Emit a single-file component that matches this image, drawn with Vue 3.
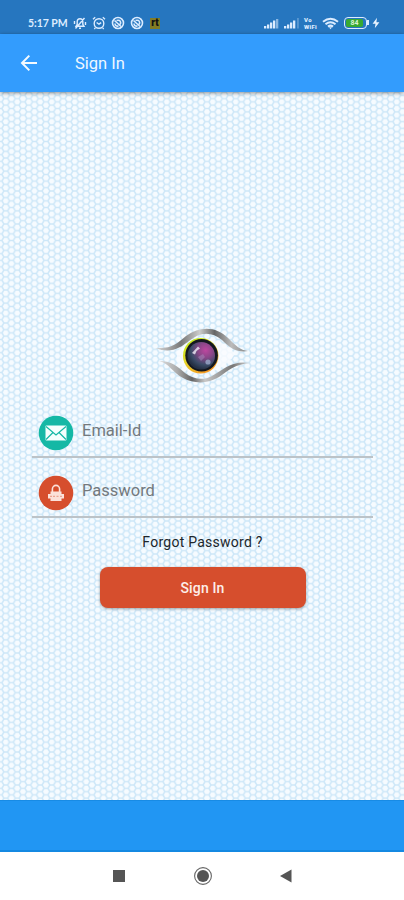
<template>
  <div class="screen">
    <div class="status-bar">
      <div class="status-left">
        <span class="clock">5:17 PM</span>
        <!-- muted bell -->
        <svg class="icon" width="14" height="14" viewBox="0 0 14 14">
          <path d="M3 10.300h8l-1.200-2V5.500a2.800 2.800 0 0 0-5.600 0v2.800zM6 12.300h2M2.500 12.500 11.500 2M1.500 5v3M12.500 6v3" />
        </svg>
        <!-- alarm -->
        <svg class="icon" width="14" height="14" viewBox="0 0 14 14">
          <circle cx="7" cy="7.500" r="4.800" />
          <path d="M4.600 6.500 7 8.200l2.200-1.500M1 3.200 3.200 1.300M13 3.200 10.800 1.300M3.300 12l-1 1M10.700 12l1 1" />
        </svg>
        <svg v-for="n in 2" :key="n" class="icon swirl" width="14" height="14" viewBox="0 0 14 14">
          <circle cx="7" cy="7" r="5.500" />
          <path d="M3.500 4.500 10 10.500M5.500 4.500c4-1 5 2 3.500 4M4 7.500c0 2 1.500 3 3.500 2.500" />
        </svg>
        <span class="app-badge">rt</span>
      </div>
      <div class="status-right">
        <svg width="15" height="11" viewBox="0 0 15 11" fill="#dcecff">
          <path d="M0 8h2.300v2.500H0zM3 6.500h2.300v4H3zM6 4.500h2.300v6H6zM9 2.500h2.300v8H9z" />
          <path d="M12 1h2.300v9.500H12z" opacity=".55" />
        </svg>
        <svg class="second" width="15" height="11" viewBox="0 0 15 11" fill="#dcecff">
          <path d="M0 8h2.300v2.500H0zM3 6.500h2.300v4H3zM6 4.500h2.300v6H6zM9 2.500h2.300v8H9z" />
          <path d="M13.300 0h1.300v10.500h-1.300z" opacity=".4" />
        </svg>
        <span class="vowifi"><span>Vo</span><span>WiFi</span></span>
        <svg class="wifi" width="17" height="13" viewBox="0 0 17 13" fill="none" stroke="#dcecff" stroke-width="2">
          <path d="M1 4.800Q8.500-1.200 16 4.800M3.500 7.200Q8.500 3.200 13.500 7.200M6 9.600Q8.500 7.600 11 9.600" />
          <path d="M7 10.200h3l-1.500 2z" fill="#dcecff" stroke="none" />
        </svg>
        <span class="battery"><span class="level">84</span></span>
        <svg class="bolt" width="8" height="12" viewBox="0 0 8 12" fill="#e8f3ff">
          <path d="M5 .8.600 6.800h2.900L2.800 11.200 7.400 5.200H4.400z" />
        </svg>
      </div>
    </div>

    <header class="app-bar">
      <svg width="18" height="18" viewBox="0 0 18 18" fill="none" stroke="#f4faff" stroke-width="2">
        <path d="M17 9H2.500M9.300 1.600 2 9l7.300 7.400" />
      </svg>
      <h1>Sign In</h1>
    </header>

    <main class="content">
      <svg class="pattern" width="100%" height="100%">
        <defs>
          <pattern id="hex" width="11.500" height="6.600" patternUnits="userSpaceOnUse">
            <path
              d="M0 3.300H1.900L3.800 0H7.650L9.550 3.300H11.500M1.900 3.300 3.800 6.600H7.650L9.550 3.300"
              fill="none"
              stroke="#cde7f8"
              stroke-width="1.500"
            />
          </pattern>
        </defs>
        <rect width="100%" height="100%" fill="url(#hex)" />
      </svg>

      <svg class="logo" width="96" height="56" viewBox="0 0 96 56">
        <defs>
          <linearGradient id="lidTop">
            <stop offset="0" stop-color="#ddd" />
            <stop offset=".28" stop-color="#777" />
            <stop offset=".48" stop-color="#ccc" />
            <stop offset=".64" stop-color="#666" />
            <stop offset=".82" stop-color="#bbb" />
            <stop offset="1" stop-color="#888" />
          </linearGradient>
          <linearGradient id="lidBottom">
            <stop offset="0" stop-color="#ddd" />
            <stop offset=".2" stop-color="#aaa" />
            <stop offset=".36" stop-color="#666" />
            <stop offset=".5" stop-color="#c8c8c8" />
            <stop offset=".8" stop-color="#777" />
            <stop offset="1" stop-color="#ddd" />
          </linearGradient>
          <linearGradient id="ring" x1="0" y1="0" x2=".6" y2="1">
            <stop offset="0" stop-color="#b9ef18" />
            <stop offset=".5" stop-color="#e4d82a" />
            <stop offset="1" stop-color="#f59a23" />
          </linearGradient>
          <radialGradient id="lens" cx=".66" cy=".3" r=".7">
            <stop offset="0" stop-color="#bd479f" />
            <stop offset=".4" stop-color="#874787" />
            <stop offset=".75" stop-color="#3b4c68" />
            <stop offset="1" stop-color="#253044" />
          </radialGradient>
        </defs>
        <!-- white of the eye -->
        <path d="M22 24C34 8 62 4 80 26 66 48 34 52 22 34z" fill="#fbfdff" opacity=".8" />
        <path
          d="M0 20C18 21 22 15 31 8 46-3 62-1 73 10c8 8 12 12 20 13-12 2-19-4-26-11C56 3 45 4 34 13 25 20 16 26 0 20z"
          fill="url(#lidTop)"
        />
        <path
          d="M4 33c13 0 18 5 26 12 8 6 18 8 27 3 12-7 20-16 39-13-16 1-22 7-32 14-11 7-25 7-36 1C17 44 15 36 4 33z"
          fill="url(#lidBottom)"
        />
        <circle cx="45.700" cy="27.800" r="17.800" fill="url(#ring)" />
        <circle cx="46.600" cy="27.200" r="16.300" fill="#141820" />
        <circle cx="46.200" cy="27.800" r="13.800" fill="url(#lens)" />
        <path d="m37 25 6-6.500 2 2-3.500 2.500-1.500 3.500z" fill="#e8e4f0" opacity=".85" />
        <circle cx="53" cy="34" r="2.600" fill="#9aa9c9" opacity=".8" />
        <path d="m43 29 5-3 2 3-4 4z" fill="#a98bbd" opacity=".5" />
      </svg>

      <form class="form" @submit.prevent>
        <label class="field">
          <svg width="36" height="36" viewBox="0 0 36 36">
            <circle cx="18" cy="18" r="17.300" fill="#15b8a5" />
            <rect x="7.500" y="10.500" width="21" height="15" rx="1" fill="#f4fffd" />
            <path
              d="M8 11.500 18 20l10-8.500M8 24.500l7-7M28 24.500l-7-7"
              fill="none"
              stroke="#15b8a5"
              stroke-width="1.200"
            />
          </svg>
          <input v-model="email" type="text" placeholder="Email-Id" />
        </label>

        <label class="field">
          <svg width="36" height="36" viewBox="0 0 36 36">
            <circle cx="18" cy="18" r="17.300" fill="#d64e2d" />
            <path d="M14.400 18v-4a3.600 3.600 0 0 1 7.200 0v4" fill="none" stroke="#fbe1da" stroke-width="1.600" />
            <path d="M12.500 16.500h11V19H26v4.500h-2.500v2.500h-11v-2.500H10V19h2.500z" fill="#fbe1da" />
            <path d="M12 21.300h2M15 21.300h2M18.500 21.300h2M22 21.300h2" stroke="#d64e2d" stroke-width="1.300" opacity=".4" />
          </svg>
          <input v-model="password" type="password" placeholder="Password" />
        </label>

        <a class="forgot">Forgot Password ?</a>
        <button class="submit" type="submit">Sign In</button>
      </form>
    </main>

    <footer class="footer"></footer>

    <nav class="nav-bar">
      <svg width="20" height="20" viewBox="0 0 20 20">
        <rect x="4" y="4" width="12" height="12" fill="#555" />
      </svg>
      <svg width="20" height="20" viewBox="0 0 20 20">
        <circle cx="10" cy="10" r="8.400" fill="none" stroke="#666" stroke-width="1.100" />
        <circle cx="10" cy="10" r="6" fill="#555" />
      </svg>
      <svg width="20" height="20" viewBox="0 0 20 20">
        <path d="M14.500 3.500v13L3 10z" fill="#555" />
      </svg>
    </nav>
  </div>
</template>

<script setup>
import { ref } from 'vue'

const email = ref('')
const password = ref('')
</script>

<style>
body {
  margin: 0;
}
</style>

<style scoped>
.screen {
  display: flex;
  flex-direction: column;
  height: 900px;
  overflow: hidden;
  background: #fff;
  font-family: Roboto, sans-serif;
}

svg {
  display: block;
  flex: none;
}

.status-bar {
  display: flex;
  justify-content: space-between;
  height: 34px;
  box-sizing: border-box;
  padding: 12px 24px 0 28px;
  background: #2676bf;
  color: #dcecff;
}

.status-left,
.status-right {
  display: flex;
  align-items: center;
  height: 22px;
}

.clock {
  width: 40px;
  margin-right: 5px;
  font-family: Lato, sans-serif;
  font-size: 10.5px;
  font-weight: 700;
  letter-spacing: -0.05px;
  white-space: nowrap;
}

.icon {
  margin-right: 5px;
  fill: none;
  stroke: #dcecff;
  stroke-width: 1.4;
}

.swirl {
  stroke-width: 1.6;
}

.app-badge {
  width: 10px;
  height: 11px;
  margin-left: 1px;
  background: #817c24;
  color: #111;
  font-size: 10px;
  font-weight: 900;
  line-height: 10px;
  text-align: center;
}

.second {
  margin-left: 5px;
}

.vowifi {
  display: flex;
  flex-direction: column;
  width: 15px;
  margin-left: 5px;
  font-size: 6px;
  font-weight: 900;
  line-height: 7px;
  letter-spacing: 0.3px;
}

.wifi {
  margin-left: 3px;
}

.battery {
  position: relative;
  width: 23px;
  height: 12px;
  box-sizing: border-box;
  margin-left: 5px;
  padding: 1px;
  border: 1.5px solid #dcecff;
  border-radius: 4px;
}

.battery::after {
  content: '';
  position: absolute;
  top: 2px;
  right: -3px;
  width: 2px;
  height: 5px;
  background: #dcecff;
}

.level {
  display: block;
  width: 17px;
  height: 8px;
  border-radius: 2px;
  background: #38a932;
  color: #d8f2d2;
  font-size: 7px;
  font-weight: 700;
  line-height: 8px;
  text-align: center;
}

.bolt {
  margin-left: 5px;
}

.app-bar {
  position: relative;
  z-index: 1;
  display: flex;
  align-items: center;
  height: 58px;
  padding-left: 20px;
  background: #339cfd;
  box-shadow: 0 1px 4px rgba(0, 0, 0, 0.45);
}

.app-bar h1 {
  margin: 0 0 0 37px;
  color: #eef7ff;
  font-size: 16.5px;
  font-weight: 400;
}

.content {
  position: relative;
  display: flex;
  flex-direction: column;
  align-items: center;
  height: 708px;
  background: #f6fbff;
}

.pattern {
  position: absolute;
  inset: 0;
}

.logo {
  position: relative;
  margin-top: 236px;
  margin-left: 2px;
}

.form {
  position: relative;
  display: flex;
  flex-direction: column;
  align-items: center;
  width: 341px;
  margin-top: 14px;
  margin-left: 1px;
}

.field {
  display: flex;
  align-items: flex-start;
  gap: 8px;
  width: 100%;
  height: 60px;
  box-sizing: border-box;
  padding: 17px 0 0 6px;
  border-bottom: 2px solid #bcc3c8;
}

.field input {
  flex: 1;
  min-width: 0;
  height: 31px;
  padding: 0;
  border: none;
  outline: none;
  background: transparent;
  color: #333;
  font: 400 16.5px Roboto, sans-serif;
}

.field input::placeholder {
  color: #74797d;
  opacity: 1;
}

.forgot {
  margin-top: 16px;
  color: #20262b;
  font-size: 14px;
  letter-spacing: 0.25px;
  line-height: 17px;
}

.submit {
  width: 206px;
  height: 41px;
  margin-top: 16px;
  border: none;
  border-radius: 8px;
  background: #d64e2d;
  box-shadow: 0 1px 3px rgba(0, 0, 0, 0.35);
  color: #fdeee9;
  font: 500 14px Roboto, sans-serif;
  letter-spacing: 0.15px;
}

.footer {
  height: 52px;
  box-sizing: border-box;
  border-top: 1px solid #188be5;
  border-bottom: 2px solid #1489e2;
  background: #2196f3;
}

.nav-bar {
  display: flex;
  align-items: center;
  justify-content: center;
  gap: 64px;
  height: 48px;
  padding-left: 1px;
}
</style>
